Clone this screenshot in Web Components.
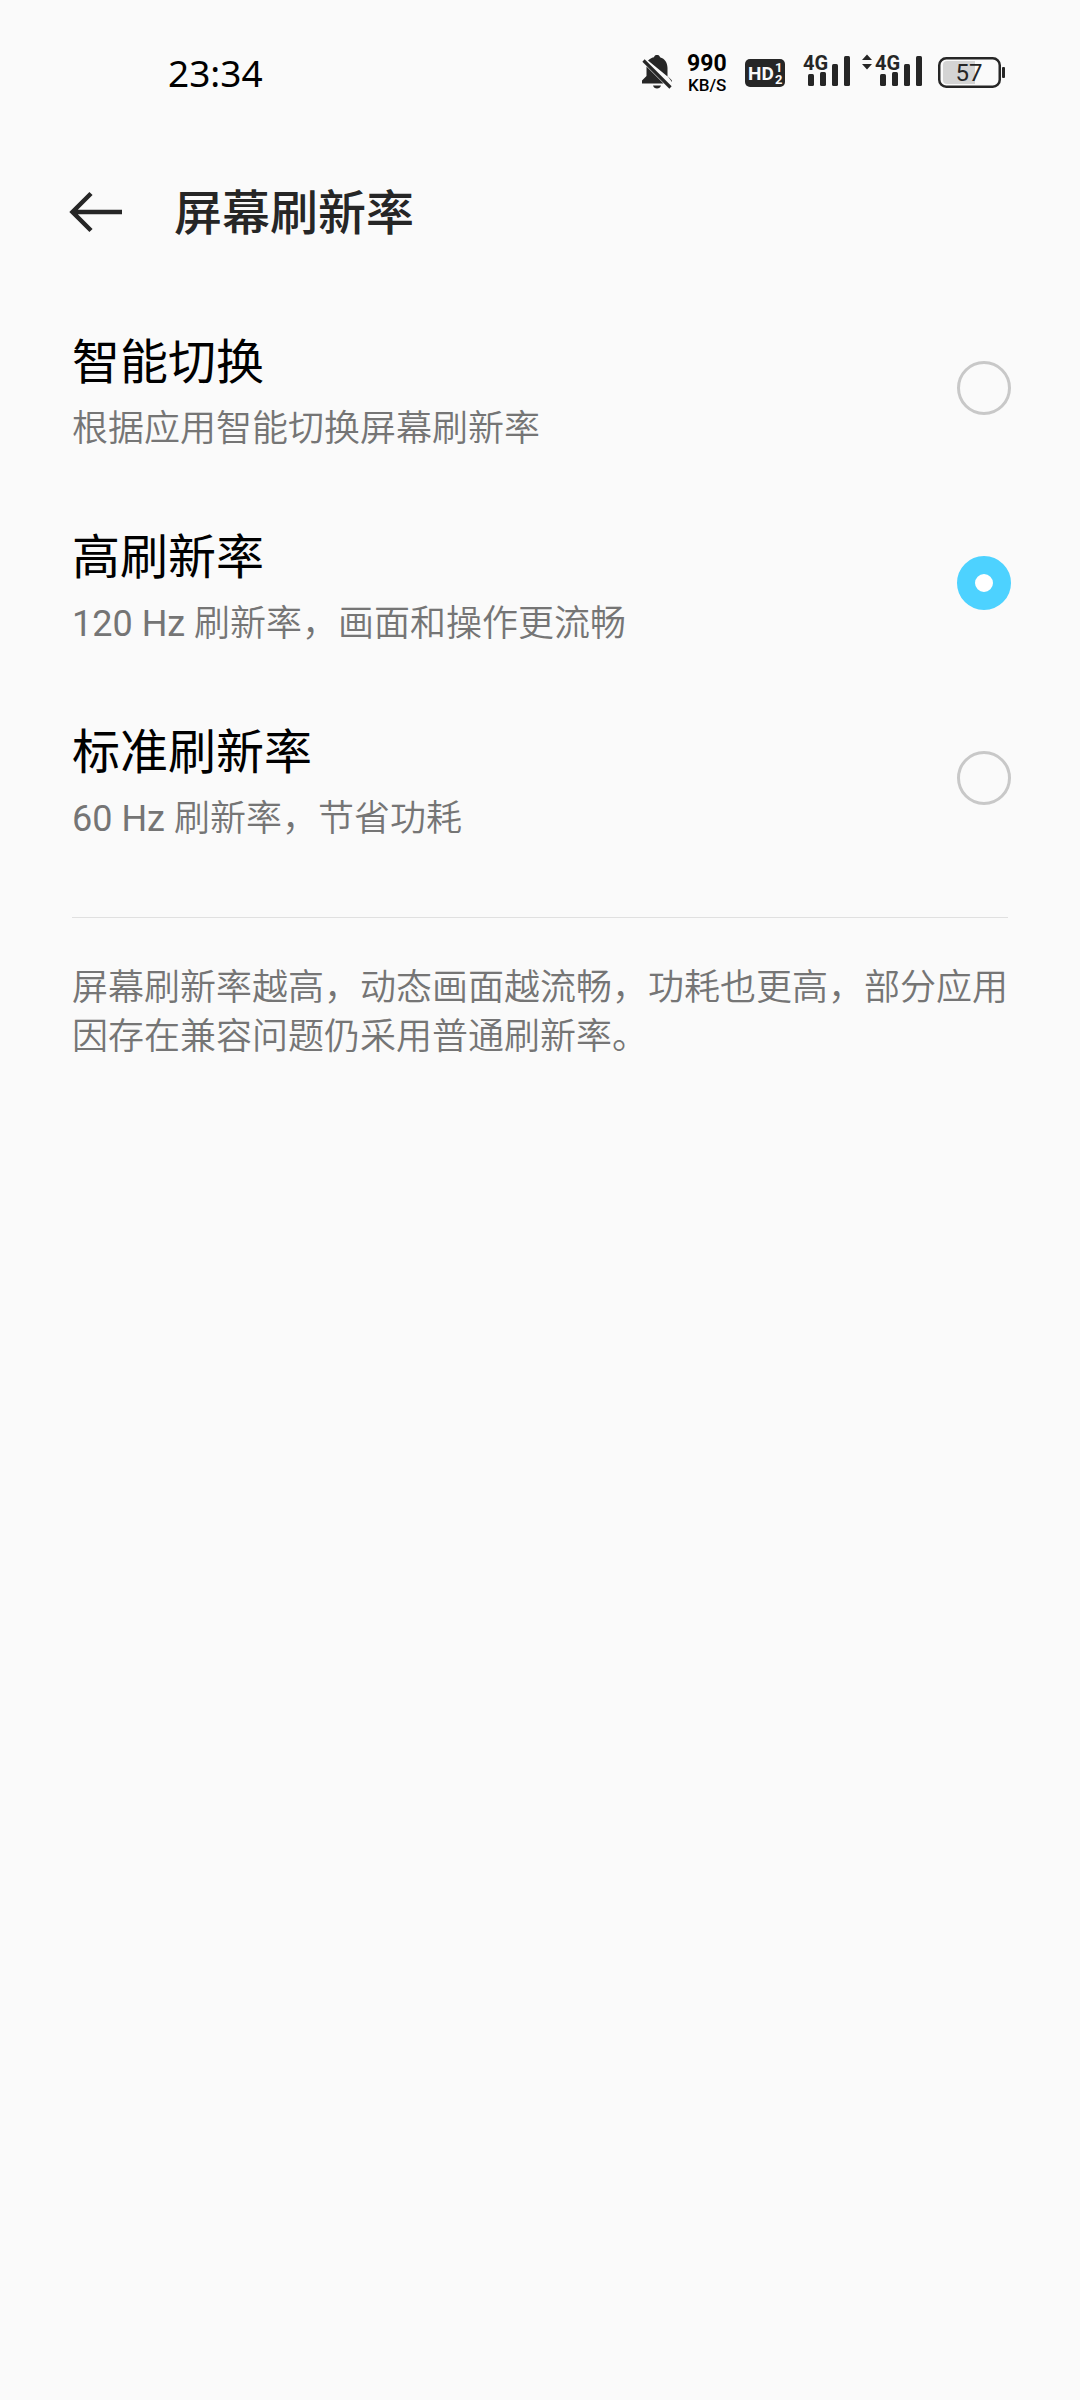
<!DOCTYPE html>
<html lang="zh-CN">
<head>
<meta charset="UTF-8">
<meta name="viewport" content="width=device-width, initial-scale=1.0">
<title>屏幕刷新率</title>
<style>
    :root {
        --page-bg: #fafafa;
        --text-primary: #000000;
        --text-secondary: #757575;
        --icon-color: #262626;
        --accent-color: #4dd2ff;
        --ring-color: #c8c8c8;
        --divider-color: #e0e0e0;
        --page-gutter: 72px;
    }
    body {
        margin: 0;
        background: var(--page-bg);
        color: var(--text-primary);
        font-family: Roboto, "Noto Sans CJK SC", sans-serif;
    }
    .latin {
        font-weight: 400;
    }
</style>
</head>
<body>
    <status-bar time="23:34" speed="990" unit="KB/S" battery="57"></status-bar>
    <app-header>屏幕刷新率</app-header>
    <main>
        <option-group label="屏幕刷新率">
            <rate-option value="auto">
                智能切换
                <span slot="summary">根据应用智能切换屏幕刷新率</span>
            </rate-option>
            <rate-option value="high" checked>
                高刷新率
                <span slot="summary"><span class="latin">120 Hz </span>刷新率，画面和操作更流畅</span>
            </rate-option>
            <rate-option value="standard">
                标准刷新率
                <span slot="summary"><span class="latin">60 Hz </span>刷新率，节省功耗</span>
            </rate-option>
        </option-group>
        <page-note>屏幕刷新率越高，动态画面越流畅，功耗也更高，部分应用因存在兼容问题仍采用普通刷新率。</page-note>
    </main>

<script>
// Signal bars with the network type above them
const signalBars = `
    <text x="-1" y="31" font-size="20" font-weight="700">4G</text>
    <rect x="4" y="35" width="6" height="12" rx="1.5"/>
    <rect x="16" y="33" width="6" height="14" rx="1.5"/>
    <rect x="28" y="25" width="6" height="22" rx="1.5"/>
    <rect x="40" y="17" width="6" height="30" rx="1.5"/>
`;

// Top system bar
class StatusBar extends HTMLElement {
    constructor() {
        super();
        this.attachShadow({ mode: 'open' });
    }

    connectedCallback() {
        const time = this.getAttribute('time') || '';
        const speed = this.getAttribute('speed') || '0';
        const unit = this.getAttribute('unit') || 'KB/S';
        const battery = this.getAttribute('battery') || '100';

        this.shadowRoot.innerHTML = `
            <style>
                :host {
                    display: flex;
                    align-items: center;
                    justify-content: space-between;
                    height: 146px;
                    padding: 0 75px 0 168px;
                    box-sizing: border-box;
                }
                time {
                    font: 400 37px/46px "Noto Sans", sans-serif;
                }
                .icons {
                    display: flex;
                    align-items: center;
                    gap: 12px;
                }
                svg {
                    display: block;
                    fill: var(--icon-color);
                    font-family: Roboto, sans-serif;
                }
                .speed {
                    fill: var(--text-primary);
                }
            </style>
            <time>${time}</time>
            <div class="icons">
                <svg width="34" height="60" viewBox="0 0 34 60" role="img" aria-label="静音">
                    <path d="M7 17.5 C9 15.5 11.5 14.5 13 14.2 C13.3 12.6 14.5 12 16 12 C17.5 12 18.7 12.6 19 14.2 C24 15.5 26.5 20 26.5 25 V33.5 Z"/>
                    <path d="M5.5 23.5 L22.5 40.5 H1 V37.5 L5.5 33 Z"/>
                    <path d="M2.5 17.5 L29.5 44.5" stroke="#262626" stroke-width="3.2" fill="none"/>
                    <path d="M26.5 33 L31 37.5 V39 Z"/>
                    <path d="M12 42.5 H20 C19.5 44.5 18 45.5 16 45.5 C14 45.5 12.5 44.5 12 42.5 Z"/>
                </svg>
                <svg class="speed" width="44" height="60" viewBox="0 0 44 60">
                    <text x="0" y="28" font-size="23" font-weight="700">${speed}</text>
                    <text x="1" y="48" font-size="17" font-weight="500">${unit}</text>
                </svg>
                <svg width="47" height="60" viewBox="0 0 47 60">
                    <rect x="2" y="16" width="40" height="28" rx="5"/>
                    <g fill="#fafafa" font-weight="700">
                        <text x="5" y="37" font-size="19">HD</text>
                        <text x="32" y="29" font-size="13">1</text>
                        <text x="32" y="41" font-size="13">2</text>
                    </g>
                </svg>
                <svg width="48" height="60" viewBox="-2 4 48 60">${signalBars}</svg>
                <svg width="60" height="60" viewBox="-14 4 60 60">
                    <path d="M-14 21 L-9 15.5 L-4 21 Z M-14 25 H-4 L-9 30.5 Z"/>
                    ${signalBars}
                </svg>
                <svg width="71" height="60" viewBox="0 0 71 60">
                    <path d="M13 18 H41 V41 H13 Q9 41 9 37 V22 Q9 18 13 18 Z" fill="#d4d4d4"/>
                    <rect x="5.25" y="15.25" width="60.5" height="28.5" rx="7" fill="none" stroke="#262626" stroke-width="2.5"/>
                    <rect x="68" y="24" width="3" height="11" rx="1"/>
                    <text x="35" y="38" font-size="24" text-anchor="middle">${battery}</text>
                </svg>
            </div>
        `;
    }
}

// Back button and page title
class AppHeader extends HTMLElement {
    constructor() {
        super();
        this.attachShadow({ mode: 'open' });
        this.shadowRoot.innerHTML = `
            <style>
                :host {
                    display: flex;
                    align-items: center;
                    gap: 48px;
                    height: 132px;
                    padding: 0 66px;
                    box-sizing: border-box;
                    color: var(--icon-color);
                }
                button {
                    padding: 0;
                    border: 0;
                    background: none;
                    color: inherit;
                    cursor: pointer;
                }
                svg {
                    display: block;
                }
                h1 {
                    margin: 0;
                    padding-top: 4px;
                    font-size: 48px;
                    line-height: 72px;
                    font-weight: 500;
                }
            </style>
            <button type="button" aria-label="返回">
                <svg width="60" height="60" viewBox="0 0 60 60" fill="none" stroke="currentColor" stroke-width="4.5">
                    <path d="M25 11.5 L6.5 30 L25 48.5 M6.5 30 H56"/>
                </svg>
            </button>
            <h1><slot></slot></h1>
        `;
    }
}

// One selectable row
class RateOption extends HTMLElement {
    constructor() {
        super();
        this.attachShadow({ mode: 'open' });
    }

    connectedCallback() {
        const value = this.getAttribute('value') || '';

        this.shadowRoot.innerHTML = `
            <style>
                :host {
                    display: block;
                }
                label {
                    display: flex;
                    align-items: center;
                    justify-content: space-between;
                    gap: 24px;
                    padding: 32px 69px 33px var(--page-gutter);
                    cursor: pointer;
                }
                .text {
                    display: grid;
                    gap: 6px;
                    padding-top: 4px;
                }
                .title {
                    font-size: 48px;
                    line-height: 72px;
                }
                .summary {
                    font-size: 36px;
                    font-weight: 350;
                    line-height: 48px;
                    color: var(--text-secondary);
                }
                input {
                    appearance: none;
                    flex: none;
                    width: 54px;
                    height: 54px;
                    margin: 0;
                    border: 3px solid var(--ring-color);
                    border-radius: 50%;
                    cursor: pointer;
                }
                input:checked {
                    border: 18px solid var(--accent-color);
                    background: #ffffff;
                }
            </style>
            <label>
                <span class="text">
                    <span class="title"><slot></slot></span>
                    <span class="summary"><slot name="summary"></slot></span>
                </span>
                <input type="radio" name="rate" value="${value}">
            </label>
        `;

        this.input = this.shadowRoot.querySelector('input');
        this.input.checked = this.hasAttribute('checked');
        this.input.addEventListener('change', () => {
            this.dispatchEvent(new CustomEvent('option-select', { bubbles: true }));
        });
    }
}

// Keeps a single option checked, each radio lives in its own shadow root
class OptionGroup extends HTMLElement {
    constructor() {
        super();
        this.attachShadow({ mode: 'open' });
    }

    connectedCallback() {
        this.shadowRoot.innerHTML = `
            <style>
                :host {
                    display: block;
                    padding: 13px 0 41px;
                }
            </style>
            <slot></slot>
        `;
        this.setAttribute('role', 'radiogroup');
        this.setAttribute('aria-label', this.getAttribute('label') || '');

        this.addEventListener('option-select', event => {
            this.querySelectorAll('rate-option').forEach(option => {
                option.input.checked = option === event.target;
            });
        });
    }
}

// Explanation below the divider
class PageNote extends HTMLElement {
    constructor() {
        super();
        this.attachShadow({ mode: 'open' });
        this.shadowRoot.innerHTML = `
            <style>
                :host {
                    display: block;
                    margin: 0 var(--page-gutter);
                    border-top: 1px solid var(--divider-color);
                    color: var(--text-secondary);
                }
                p {
                    margin: 46px 0;
                    font-size: 36px;
                    font-weight: 350;
                    line-height: 49px;
                }
            </style>
            <p><slot></slot></p>
        `;
    }
}

customElements.define('status-bar', StatusBar);
customElements.define('app-header', AppHeader);
customElements.define('rate-option', RateOption);
customElements.define('option-group', OptionGroup);
customElements.define('page-note', PageNote);
</script>
</body>
</html>
